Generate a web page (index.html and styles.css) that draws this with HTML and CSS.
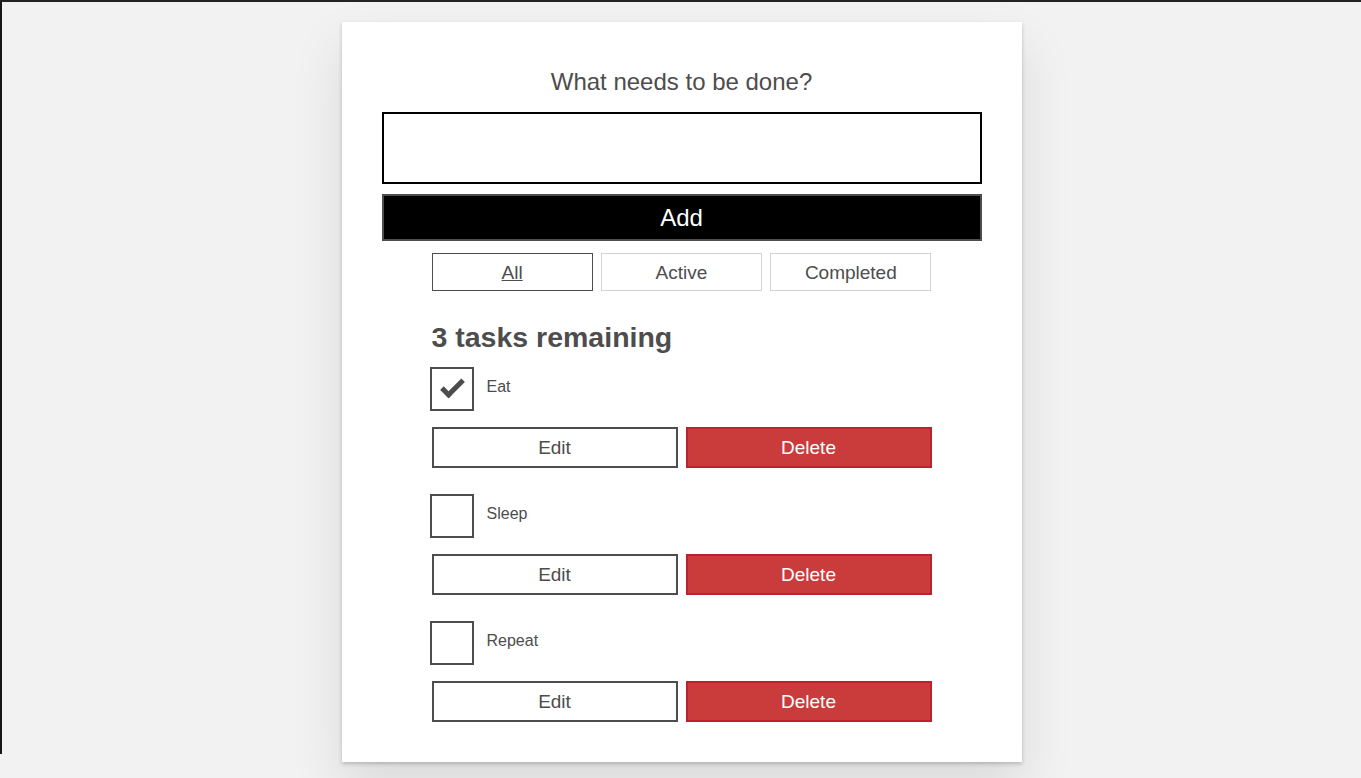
FILE: index.html
```html
<!DOCTYPE html>
<html lang="en">
<head>
<meta charset="utf-8">
<title>Todo</title>
<link rel="stylesheet" href="styles.css">
</head>
<body>
<main class="todoapp">
  <form class="new-todo">
    <h2 class="label-lg"><label for="new-todo-input">What needs to be done?</label></h2>
    <input type="text" id="new-todo-input" class="input-lg" autocomplete="off">
    <button type="button" class="btn btn-primary btn-lg">Add</button>
  </form>
  <div class="filters">
    <button type="button" class="btn btn-filter is-pressed"><span class="filter-name">All</span></button>
    <button type="button" class="btn btn-filter"><span>Active</span></button>
    <button type="button" class="btn btn-filter"><span>Completed</span></button>
  </div>
  <h2 class="list-heading">3 tasks remaining</h2>
  <ul class="todo-list">
    <li class="todo">
      <div class="cb-row">
        <span class="cb is-checked"></span>
        <label class="cb-label">Eat</label>
      </div>
      <div class="btn-group">
        <button type="button" class="btn btn-item">Edit</button>
        <button type="button" class="btn btn-item btn-danger">Delete</button>
      </div>
    </li>
    <li class="todo">
      <div class="cb-row">
        <span class="cb"></span>
        <label class="cb-label">Sleep</label>
      </div>
      <div class="btn-group">
        <button type="button" class="btn btn-item">Edit</button>
        <button type="button" class="btn btn-item btn-danger">Delete</button>
      </div>
    </li>
    <li class="todo">
      <div class="cb-row">
        <span class="cb"></span>
        <label class="cb-label">Repeat</label>
      </div>
      <div class="btn-group">
        <button type="button" class="btn btn-item">Edit</button>
        <button type="button" class="btn btn-item btn-danger">Delete</button>
      </div>
    </li>
  </ul>
</main>
</body>
</html>
```
FILE: styles.css
```css
* {
  box-sizing: border-box;
}

html {
  background: linear-gradient(#171717, #171717) left top / 2px 752px no-repeat, #f2f2f2;
  border-top: 2px solid #222222;
}

body {
  margin: 0;
  padding-left: 2px;
  font-family: "Liberation Sans", Arial, sans-serif;
  color: #4d4d4d;
}

.todoapp {
  width: 680px;
  margin: 20px auto 40px;
  padding: 40px;
  background: #ffffff;
  box-shadow: 0 2px 4px 0 rgba(0, 0, 0, 0.2), 0 25px 50px 0 rgba(0, 0, 0, 0.1);
}

.new-todo {
  display: flex;
  flex-direction: column;
}

.label-lg {
  margin: 0 0 10px;
  padding: 8px;
  text-align: center;
  font-size: 24px;
  font-weight: 400;
  line-height: 24.4px;
}

.input-lg {
  display: block;
  width: 100%;
  height: 72px;
  padding: 20px;
  border: 2px solid #000000;
  border-radius: 0;
  font: inherit;
  font-size: 19px;
  outline: none;
}

.btn {
  font-family: inherit;
  color: #4d4d4d;
  background: #ffffff;
  border: 2px solid #4d4d4d;
  border-radius: 0;
  padding: 0;
  cursor: pointer;
  font-size: 19px;
}

.btn-primary {
  color: #ffffff;
  background: #000000;
}

.btn-lg {
  margin-top: 10px;
  height: 47px;
  font-size: 24px;
}

.filters {
  width: 500px;
  margin: 12px auto 0;
  display: flex;
  gap: 8px;
}

.btn-filter {
  flex: 1 1 0;
  height: 38px;
  padding-top: 1px;
  border: 1px solid #d3d3d3;
  font-size: 19px;
}

.btn-filter.is-pressed {
  border-color: #4d4d4d;
}

.filter-name {
  text-decoration: underline;
}

.list-heading {
  width: 500px;
  margin: 29px auto 0;
  font-size: 28.5px;
  line-height: 34px;
  font-weight: 700;
}

.todo-list {
  list-style: none;
  width: 500px;
  margin: 13px auto 0;
  padding: 0;
}

.todo + .todo {
  margin-top: 26px;
}

.cb-row {
  display: flex;
  align-items: flex-start;
  height: 44px;
}

.cb {
  position: relative;
  flex: none;
  width: 44px;
  height: 44px;
  margin-left: -2px;
  border: 2px solid #4d4d4d;
}

.cb.is-checked::after {
  content: "";
  position: absolute;
  top: 11px;
  left: 9px;
  width: 18px;
  height: 7px;
  border: solid #4d4d4d;
  border-width: 0 0 5px 5px;
  transform: rotate(-45deg);
}

.cb-label {
  padding: 10px 0 0 13px;
  font-size: 16px;
  line-height: 20px;
}

.btn-group {
  display: flex;
  gap: 8px;
  margin-top: 16px;
}

.btn-item {
  flex: 1 1 0;
  height: 41px;
}

.btn-danger {
  color: #ffffff;
  background: #ca3c3c;
  border-color: #bd2130;
}
```
